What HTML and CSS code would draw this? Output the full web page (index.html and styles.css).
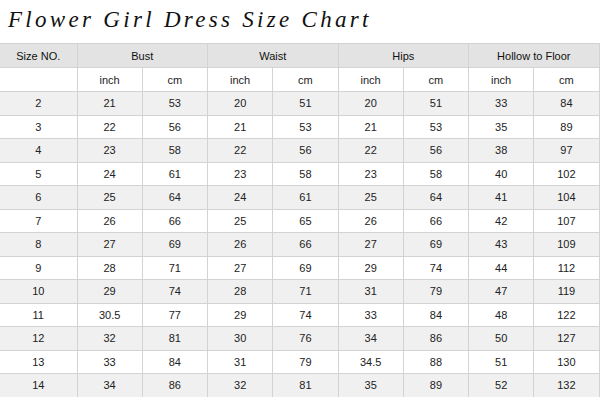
FILE: index.html
```html
<!DOCTYPE html>
<html lang="en">
<head>
  <meta charset="UTF-8">
  <title>Flower Girl Dress Size Chart</title>
  <link rel="stylesheet" href="styles.css">
</head>
<body>

  <div class="title">Flower Girl Dress Size Chart</div>

  <table class="chart">
    <colgroup>
      <col class="c-size">
      <col><col><col><col><col><col><col><col>
    </colgroup>
    <thead>
      <tr class="head">
        <th>Size NO.</th>
        <th colspan="2">Bust</th>
        <th colspan="2">Waist</th>
        <th colspan="2">Hips</th>
        <th colspan="2">Hollow to Floor</th>
      </tr>
      <tr class="units">
        <td></td>
        <td>inch</td><td>cm</td>
        <td>inch</td><td>cm</td>
        <td>inch</td><td>cm</td>
        <td>inch</td><td>cm</td>
      </tr>
    </thead>
    <tbody id="chart-body">
      <!-- rows are filled in by the script below -->
    </tbody>
  </table>

  <script>
    // size, bust in/cm, waist in/cm, hips in/cm, hollow to floor in/cm
    const sizes = [
      [2, 21, 53, 20, 51, 20, 51, 33, 84],
      [3, 22, 56, 21, 53, 21, 53, 35, 89],
      [4, 23, 58, 22, 56, 22, 56, 38, 97],
      [5, 24, 61, 23, 58, 23, 58, 40, 102],
      [6, 25, 64, 24, 61, 25, 64, 41, 104],
      [7, 26, 66, 25, 65, 26, 66, 42, 107],
      [8, 27, 69, 26, 66, 27, 69, 43, 109],
      [9, 28, 71, 27, 69, 29, 74, 44, 112],
      [10, 29, 74, 28, 71, 31, 79, 47, 119],
      [11, "30.5", 77, 29, 74, 33, 84, 48, 122],
      [12, 32, 81, 30, 76, 34, 86, 50, 127],
      [13, 33, 84, 31, 79, "34.5", 88, 51, 130],
      [14, 34, 86, 32, 81, 35, 89, 52, 132]
    ];

    const body = document.getElementById("chart-body");
    sizes.forEach((row) => {
      const tr = document.createElement("tr");
      tr.innerHTML = row.map((v) => `<td>${v}</td>`).join("");
      body.appendChild(tr);
    });
  </script>

</body>
</html>
```

FILE: styles.css
```css
body {
  margin: 0;
  padding: 0;
  background: #ffffff;
  font-family: 'Liberation Sans', Arial, sans-serif;
}

.title {
  height: 43px;
  box-sizing: border-box;
  padding: 6px 0 0 8px;
  font-family: 'Liberation Serif', 'Times New Roman', serif;
  font-style: italic;
  font-size: 23px;
  letter-spacing: 3.3px;
  color: #111;
  line-height: 28px;
}

.chart {
  width: 599px;
  border-collapse: collapse;
  table-layout: fixed;
  font-size: 11px;
  color: #222;
}

.chart col {
  width: 65.25px;
}

.chart col.c-size {
  width: 77px;
}

.chart th, .chart td {
  border: 1px solid #d3d3d3;
  text-align: center;
  padding: 0;
  height: 23px;
}

.chart th:first-child, .chart td:first-child {
  border-left: none;
}

.chart .head th {
  background-color: #e3e3e3;
  font-weight: normal;
  color: #111;
  height: 23px;
}

.chart .units td {
  background-color: #ffffff;
}

.chart tbody tr:nth-child(odd) td {
  background-color: #f0f0f0;
}

.chart tbody td {
  height: 22.5px;
}
```
